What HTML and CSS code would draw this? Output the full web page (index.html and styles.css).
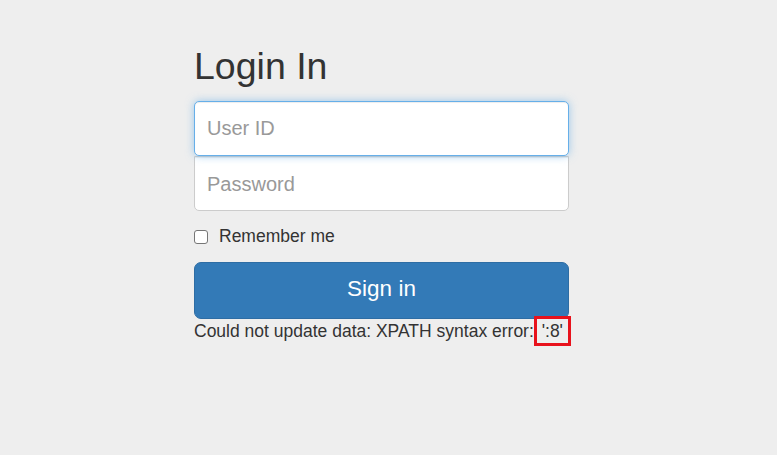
FILE: index.html
```html
<!DOCTYPE html>
<html lang="en">
<head>
<meta charset="utf-8">
<title>Login In</title>
<link rel="stylesheet" href="styles.css">
</head>
<body>
<div class="page">
  <form class="signin">
    <h2 class="signin-heading">Login In</h2>
    <input class="field field-top is-focus" type="text" placeholder="User ID" autofocus>
    <input class="field field-bottom" type="password" placeholder="Password">
    <label class="check"><span class="box"></span>Remember me</label>
    <button class="btn" type="button">Sign in</button>
    <p class="msg">Could not update data: XPATH syntax error: <span class="mark">':8'</span></p>
  </form>
</div>
</body>
</html>
```
FILE: styles.css
```css
* { box-sizing: border-box; }
html, body { margin: 0; padding: 0; }
body {
  background: #eeeeee;
  font-family: "Liberation Sans", Arial, Helvetica, sans-serif;
  color: #333333;
  font-size: 17.5px;
  line-height: 25px;
  width: 777px;
  height: 455px;
  overflow: hidden;
}
.page { padding: 46px 0 0 194px; }
.signin { width: 375px; display: flex; flex-direction: column; }
.signin-heading {
  margin: 0 0 14px;
  font-size: 37.5px;
  line-height: 41px;
  font-weight: 500;
  color: #333333;
}
.field {
  display: block;
  width: 375px;
  height: 55px;
  margin: 0;
  padding: 0 12px;
  font-family: "Liberation Sans", Arial, Helvetica, sans-serif;
  font-size: 20px;
  color: #555555;
  background: #ffffff;
  border: 1px solid #cccccc;
  box-shadow: inset 0 1px 1px rgba(0,0,0,.075);
  outline: none;
}
.field::placeholder { color: #999999; opacity: 1; }
.field-top { border-radius: 5px; position: relative; z-index: 2; }
.field-bottom { border-radius: 0 0 5px 5px; padding-top: 2px; }
.is-focus {
  border-color: #66afe9;
  box-shadow: inset 0 1px 1px rgba(0,0,0,.075), 0 0 8px rgba(102,175,233,.6);
  caret-color: #333;
}
.check {
  display: flex;
  align-items: center;
  height: 25px;
  margin: 13px 0 13px;
  font-size: 17.5px;
}
.box {
  width: 14px;
  height: 14px;
  border: 1px solid #767676;
  border-radius: 3px;
  background: #ffffff;
  margin: 1px 11px 0 0;
}
.btn {
  height: 57px;
  width: 375px;
  margin: 0;
  padding: 0 0 3px;
  background: #337ab7;
  border: 1px solid #2e6da4;
  border-radius: 7px;
  color: #ffffff;
  font-family: "Liberation Sans", Arial, Helvetica, sans-serif;
  font-size: 22.5px;
}
.msg { margin: 0; white-space: nowrap; font-size: 17.5px; line-height: 25px; }
.mark {
  display: inline-block;
  line-height: 20px;
  padding: 0 3px;
  outline: 3px solid #e8121c;
  outline-offset: 2px;
}
```
